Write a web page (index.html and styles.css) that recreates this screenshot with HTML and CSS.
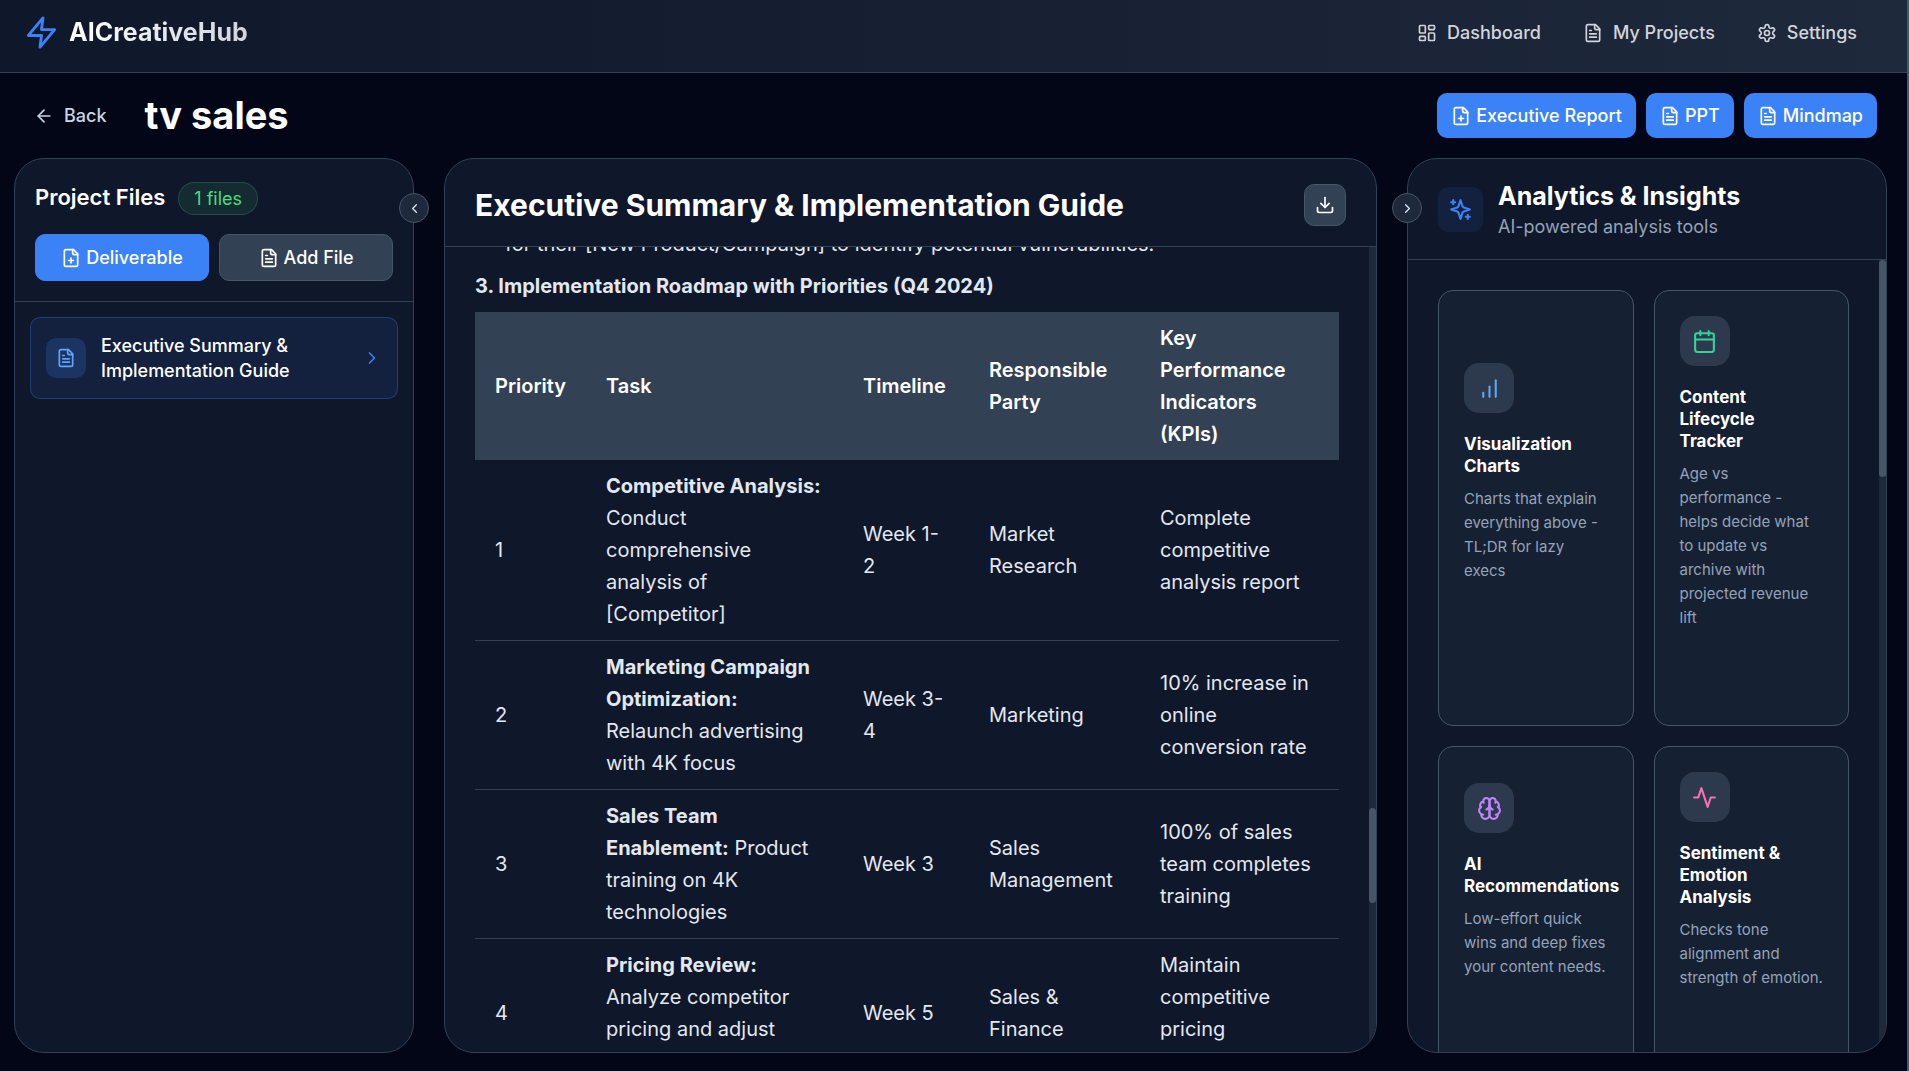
FILE: index.html
```html
<!DOCTYPE html>
<html lang="en">
<head>
<meta charset="utf-8">
<meta name="viewport" content="width=device-width, initial-scale=1">
<title>tv sales – AICreativeHub</title>
<link rel="stylesheet" href="styles.css">
</head>
<body>
<svg class="sprite" aria-hidden="true">
  <symbol id="zap" viewBox="0 0 24 24"><path d="M13 2 3 14h9l-1 8 10-12h-9l1-8z"/></symbol>
  <symbol id="dashboard" viewBox="0 0 24 24"><rect width="7" height="9" x="3" y="3" rx="1"/><rect width="7" height="5" x="14" y="3" rx="1"/><rect width="7" height="9" x="14" y="12" rx="1"/><rect width="7" height="5" x="3" y="16" rx="1"/></symbol>
  <symbol id="file-text" viewBox="0 0 24 24"><path d="M15 2H6a2 2 0 0 0-2 2v16a2 2 0 0 0 2 2h12a2 2 0 0 0 2-2V7Z"/><path d="M14 2v4a2 2 0 0 0 2 2h4"/><path d="M10 9H8"/><path d="M16 13H8"/><path d="M16 17H8"/></symbol>
  <symbol id="file-plus" viewBox="0 0 24 24"><path d="M15 2H6a2 2 0 0 0-2 2v16a2 2 0 0 0 2 2h12a2 2 0 0 0 2-2V7Z"/><path d="M14 2v4a2 2 0 0 0 2 2h4"/><path d="M9 15h6"/><path d="M12 18v-6"/></symbol>
  <symbol id="settings" viewBox="0 0 24 24"><path d="M12.22 2h-.44a2 2 0 0 0-2 2v.18a2 2 0 0 1-1 1.73l-.43.25a2 2 0 0 1-2 0l-.15-.08a2 2 0 0 0-2.73.73l-.22.38a2 2 0 0 0 .73 2.73l.15.1a2 2 0 0 1 1 1.72v.51a2 2 0 0 1-1 1.74l-.15.09a2 2 0 0 0-.73 2.73l.22.38a2 2 0 0 0 2.73.73l.15-.08a2 2 0 0 1 2 0l.43.25a2 2 0 0 1 1 1.73V20a2 2 0 0 0 2 2h.44a2 2 0 0 0 2-2v-.18a2 2 0 0 1 1-1.73l.43-.25a2 2 0 0 1 2 0l.15.08a2 2 0 0 0 2.73-.73l.22-.39a2 2 0 0 0-.73-2.73l-.15-.08a2 2 0 0 1-1-1.74v-.5a2 2 0 0 1 1-1.74l.15-.09a2 2 0 0 0 .73-2.73l-.22-.38a2 2 0 0 0-2.73-.73l-.15.08a2 2 0 0 1-2 0l-.43-.25a2 2 0 0 1-1-1.73V4a2 2 0 0 0-2-2z"/><circle cx="12" cy="12" r="3"/></symbol>
  <symbol id="arrow-left" viewBox="0 0 24 24"><path d="m12 19-7-7 7-7"/><path d="M19 12H5"/></symbol>
  <symbol id="chevron-left" viewBox="0 0 24 24"><path d="m15 18-6-6 6-6"/></symbol>
  <symbol id="chevron-right" viewBox="0 0 24 24"><path d="m9 18 6-6-6-6"/></symbol>
  <symbol id="download" viewBox="0 0 24 24"><path d="M21 15v4a2 2 0 0 1-2 2H5a2 2 0 0 1-2-2v-4"/><path d="m7 10 5 5 5-5"/><path d="M12 15V3"/></symbol>
  <symbol id="sparkles" viewBox="0 0 24 24"><path d="m12 3-1.912 5.813a2 2 0 0 1-1.275 1.275L3 12l5.813 1.912a2 2 0 0 1 1.275 1.275L12 21l1.912-5.813a2 2 0 0 1 1.275-1.275L21 12l-5.813-1.912a2 2 0 0 1-1.275-1.275L12 3Z"/><path d="M5 3v4"/><path d="M19 17v4"/><path d="M3 5h4"/><path d="M17 19h4"/></symbol>
  <symbol id="bars" viewBox="0 0 24 24"><path d="M12 20V10"/><path d="M18 20V4"/><path d="M6 20v-4"/></symbol>
  <symbol id="calendar" viewBox="0 0 24 24"><path d="M8 2v4"/><path d="M16 2v4"/><rect width="18" height="18" x="3" y="4" rx="2"/><path d="M3 10h18"/></symbol>
  <symbol id="brain" viewBox="0 0 24 24"><path d="M12 5a3 3 0 1 0-5.997.125 4 4 0 0 0-2.526 5.77 4 4 0 0 0 .556 6.588A4 4 0 1 0 12 18Z"/><path d="M12 5a3 3 0 1 1 5.997.125 4 4 0 0 1 2.526 5.77 4 4 0 0 1-.556 6.588A4 4 0 1 1 12 18Z"/><path d="M15 13a4.5 4.5 0 0 1-3-4 4.5 4.5 0 0 1-3 4"/><path d="M17.599 6.5a3 3 0 0 0 .399-1.375"/><path d="M6.003 5.125A3 3 0 0 0 6.401 6.5"/><path d="M3.477 10.896a4 4 0 0 1 .585-.396"/><path d="M19.938 10.5a4 4 0 0 1 .585.396"/><path d="M6 18a4 4 0 0 1-1.967-.516"/><path d="M19.967 17.484A4 4 0 0 1 18 18"/></symbol>
  <symbol id="activity" viewBox="0 0 24 24"><path d="M22 12h-4l-3 9L9 3l-3 9H2"/></symbol>
</svg>

<div class="app">
  <header class="topbar">
    <a class="brand" href="#"><svg class="icon brand-icon"><use href="#zap"/></svg><span class="brand-name">AICreativeHub</span></a>
    <nav class="nav">
      <a href="#"><svg class="icon"><use href="#dashboard"/></svg>Dashboard</a>
      <a href="#"><svg class="icon"><use href="#file-text"/></svg>My Projects</a>
      <a href="#"><svg class="icon"><use href="#settings"/></svg>Settings</a>
    </nav>
  </header>

  <div class="titlebar">
    <button class="back" type="button"><svg class="icon"><use href="#arrow-left"/></svg>Back</button>
    <h1>tv sales</h1>
    <div class="actions">
      <button class="btn" type="button"><svg class="icon"><use href="#file-plus"/></svg>Executive Report</button>
      <button class="btn" type="button"><svg class="icon"><use href="#file-text"/></svg>PPT</button>
      <button class="btn" type="button"><svg class="icon"><use href="#file-text"/></svg>Mindmap</button>
    </div>
  </div>

  <main class="columns">
    <aside class="column files">
      <div class="panel">
        <div class="files-head">
          <div class="files-title"><h2>Project Files</h2><span class="badge">1 files</span></div>
          <div class="files-buttons">
            <button class="btn btn-outlined" type="button"><svg class="icon"><use href="#file-plus"/></svg>Deliverable</button>
            <button class="btn btn-outlined btn-muted" type="button"><svg class="icon"><use href="#file-text"/></svg>Add File</button>
          </div>
        </div>
        <div class="file-list">
          <button class="file" type="button">
            <span class="file-icon"><svg class="icon"><use href="#file-text"/></svg></span>
            <span class="file-name">Executive Summary &amp; Implementation Guide</span>
            <svg class="icon file-arrow"><use href="#chevron-right"/></svg>
          </button>
        </div>
      </div>
      <button class="toggle toggle-right" type="button" aria-label="Collapse project files"><svg class="icon"><use href="#chevron-left"/></svg></button>
    </aside>

    <section class="column document">
      <div class="panel">
        <div class="doc-head">
          <h2>Executive Summary &amp; Implementation Guide</h2>
          <button class="download" type="button" aria-label="Download"><svg class="icon"><use href="#download"/></svg></button>
        </div>
        <div class="scroller">
          <div class="doc-body">
            <p class="doc-item">for their [New Product/Campaign] to identify potential vulnerabilities.</p>
            <h3>3. Implementation Roadmap with Priorities (Q4 2024)</h3>
            <table>
              <colgroup><col class="col-priority"><col class="col-task"><col class="col-time"><col class="col-party"><col></colgroup>
              <thead>
                <tr><th>Priority</th><th>Task</th><th>Timeline</th><th>Responsible Party</th><th>Key Performance Indicators (KPIs)</th></tr>
              </thead>
              <tbody>
                <tr><td>1</td><td><strong>Competitive Analysis:</strong> Conduct comprehensive analysis of [Competitor]</td><td>Week 1-2</td><td>Market Research</td><td>Complete competitive analysis report</td></tr>
                <tr><td>2</td><td><strong>Marketing Campaign Optimization:</strong> Relaunch advertising with 4K focus</td><td>Week 3-4</td><td>Marketing</td><td>10% increase in online conversion rate</td></tr>
                <tr><td>3</td><td><strong>Sales Team Enablement:</strong> Product training on 4K technologies</td><td>Week 3</td><td>Sales Management</td><td>100% of sales team completes training</td></tr>
                <tr class="row-tall"><td>4</td><td class="cell-top"><strong>Pricing Review:</strong> Analyze competitor pricing and adjust</td><td>Week 5</td><td>Sales &amp; Finance</td><td class="cell-top">Maintain competitive pricing</td></tr>
              </tbody>
            </table>
          </div>
          <div class="track"><div class="thumb thumb-doc"></div></div>
        </div>
      </div>
    </section>

    <aside class="column analytics">
      <div class="panel">
        <div class="ana-head">
          <span class="ana-icon"><svg class="icon"><use href="#sparkles"/></svg></span>
          <div><h2>Analytics &amp; Insights</h2><p>AI-powered analysis tools</p></div>
        </div>
        <div class="scroller">
          <div class="cards">
            <article class="card"><span class="card-icon blue"><svg class="icon"><use href="#bars"/></svg></span><h3>Visualization Charts</h3><p>Charts that explain everything above - TL;DR for lazy execs</p></article>
            <article class="card"><span class="card-icon green"><svg class="icon"><use href="#calendar"/></svg></span><h3>Content Lifecycle Tracker</h3><p>Age vs performance - helps decide what to update vs archive with projected revenue lift</p></article>
            <article class="card"><span class="card-icon purple"><svg class="icon"><use href="#brain"/></svg></span><h3>AI Recommendations</h3><p>Low-effort quick wins and deep fixes your content needs.</p></article>
            <article class="card"><span class="card-icon pink"><svg class="icon"><use href="#activity"/></svg></span><h3>Sentiment &amp; Emotion Analysis</h3><p>Checks tone alignment and strength of emotion.</p></article>
          </div>
          <div class="track"><div class="thumb thumb-cards"></div></div>
        </div>
      </div>
      <button class="toggle toggle-left" type="button" aria-label="Collapse analytics"><svg class="icon"><use href="#chevron-right"/></svg></button>
    </aside>
  </main>
</div>
</body>
</html>
```
FILE: styles.css
```css
*, *::before, *::after { box-sizing: border-box; }

body {
  margin: 0;
  height: 100vh;
  overflow: hidden;
  background: #020617;
  color: #fff;
  font: 500 18px/25px Inter, "Liberation Sans", sans-serif;
}

h1, h2, h3, p { margin: 0; }
button { font: inherit; color: inherit; cursor: pointer; }
a { color: inherit; text-decoration: none; }

.sprite { display: none; }

.icon {
  width: 20px;
  height: 20px;
  flex: none;
  fill: none;
  stroke: currentColor;
  stroke-width: 2;
  stroke-linecap: round;
  stroke-linejoin: round;
}

.app {
  display: flex;
  flex-direction: column;
  height: 100%;
  border-right: 2px solid #475569;
}

/* Top bar */
.topbar {
  display: flex;
  align-items: center;
  justify-content: space-between;
  padding: 15px 50px 22px 24px;
  border-bottom: 1px solid #334155;
  background: linear-gradient(90deg, #0f172a, #1e293b);
}
.brand { display: flex; align-items: center; gap: 10px; }
.brand-icon { width: 35px; height: 35px; color: #3b82f6; }
.brand-name {
  font-size: 25px;
  font-weight: 700;
  line-height: 35px;
  background: linear-gradient(90deg, #fff, #d1d5db);
  background-clip: text;
  -webkit-background-clip: text;
  color: transparent;
}
.nav { display: flex; gap: 42px; color: #d1d5db; }
.nav a { display: flex; align-items: center; gap: 10px; }

/* Project title row */
.titlebar {
  display: flex;
  align-items: center;
  padding: 20px 30px 20px 34px;
}
.back {
  display: flex;
  align-items: center;
  gap: 10px;
  padding: 0;
  border: 0;
  background: none;
  color: #cbd5e1;
}
h1 { margin-left: 38px; font-size: 38px; font-weight: 700; line-height: 45px; }
.actions { display: flex; gap: 10px; margin-left: auto; }

.btn {
  display: flex;
  align-items: center;
  justify-content: center;
  gap: 5px;
  padding: 10px 14px;
  border: 0;
  border-radius: 10px;
  background: #3b82f6;
}
.btn-outlined { flex: 1; border: 1px solid #3b82f6; }
.btn-muted { background: #334155; border-color: #475569; }

/* Three columns */
.columns {
  display: flex;
  flex: 1;
  gap: 30px;
  min-height: 0;
  padding: 0 20px 18px 14px;
}
.column { position: relative; display: flex; min-width: 0; }
.files { flex: 0 0 400px; }
.document { flex: 1; }
.analytics { flex: 0 0 480px; }

.panel {
  display: flex;
  flex: 1;
  flex-direction: column;
  min-width: 0;
  overflow: hidden;
  border: 1px solid #334155;
  border-radius: 30px;
  background: #0f172a;
}

.toggle {
  position: absolute;
  top: 35px;
  display: flex;
  align-items: center;
  justify-content: center;
  width: 30px;
  height: 30px;
  padding: 0;
  border: 1px solid #475569;
  border-radius: 50%;
  background: #1e293b;
  color: #e2e8f0;
}
.toggle .icon { width: 15px; height: 15px; }
.toggle-right { right: -15px; }
.toggle-left { left: -15px; }

.scroller { display: flex; flex: 1; min-height: 0; overflow: hidden; }
.track { flex: 0 0 7px; background: #1e293b; }
.thumb { border-radius: 4px; background: #475569; }
.thumb-doc { height: 95px; margin-top: 561px; }
.thumb-cards { height: 217px; }

/* Project files */
.files-head { padding: 20px; border-bottom: 1px solid #334155; }
.files-title { display: flex; gap: 13px; padding-top: 3px; }
.files-title h2 { font-size: 22px; font-weight: 600; line-height: 30px; }
.badge {
  padding: 3px 15px;
  border: 1px solid rgba(74, 222, 128, .2);
  border-radius: 17px;
  background: rgba(74, 222, 128, .1);
  color: #4ade80;
  font-weight: 400;
}
.files-buttons { display: flex; gap: 10px; margin-top: 19px; }
.file-list { padding: 15px; }
.file {
  display: flex;
  align-items: center;
  gap: 15px;
  width: 100%;
  padding: 15px;
  border: 1px solid rgba(59, 130, 246, .3);
  border-radius: 10px;
  background: rgba(59, 130, 246, .1);
  text-align: left;
}
.file-icon {
  display: grid;
  place-items: center;
  width: 40px;
  height: 40px;
  border-radius: 10px;
  background: rgba(59, 130, 246, .2);
  color: #60a5fa;
}
.file-name { flex: 1; max-width: 220px; }
.file-arrow { margin-left: auto; color: #3b82f6; }

/* Document */
.doc-head {
  display: flex;
  align-items: center;
  justify-content: space-between;
  padding: 25px 30px 20px;
  border-bottom: 1px solid #334155;
}
.doc-head h2 { font-size: 30px; font-weight: 700; line-height: 40px; }
.download {
  display: grid;
  place-items: center;
  width: 42px;
  height: 42px;
  padding: 0;
  border: 1px solid #475569;
  border-radius: 10px;
  background: #334155;
}
.doc-body {
  flex: 1;
  padding: 0 30px;
  color: #e2e8f0;
  font-size: 20px;
  font-weight: 400;
  line-height: 32px;
}
/* The body is shown part-way down its length. */
.doc-item { margin: -19px 0 10px; padding-left: 30px; }
.doc-body h3 { margin-bottom: 10px; font-size: 20px; font-weight: 700; }

table { width: 100%; table-layout: fixed; border-collapse: collapse; }
.col-priority { width: 111px; }
.col-task { width: 257px; }
.col-time { width: 126px; }
.col-party { width: 171px; }
th, td { padding: 10px 20px; text-align: left; vertical-align: middle; }
th { background: #334155; color: #fff; font-weight: 600; }
tbody tr { border-bottom: 1px solid #334155; }
.row-tall { height: 149px; }
.cell-top { vertical-align: top; }
strong { font-weight: 700; }

/* Analytics */
.ana-head {
  display: flex;
  align-items: center;
  gap: 15px;
  padding: 20px 30px;
  border-bottom: 1px solid #334155;
}
.ana-icon {
  display: grid;
  place-items: center;
  width: 45px;
  height: 45px;
  border-radius: 10px;
  background: rgba(59, 130, 246, .1);
  color: #3b82f6;
}
.ana-icon .icon { width: 25px; height: 25px; }
.ana-head h2 { font-size: 25px; font-weight: 700; line-height: 35px; }
.ana-head p { color: #94a3b8; font-weight: 400; }

.cards {
  display: grid;
  flex: 1;
  grid-template-columns: 1fr 1fr;
  gap: 20px;
  min-width: 0;
  padding: 30px;
  align-content: start;
}
.card {
  display: flex;
  flex-direction: column;
  justify-content: center;
  min-width: 0;
  padding: 25px 25px 95px;
  border: 1px solid #475569;
  border-radius: 15px;
  background: rgba(30, 41, 59, .5);
}
.card-icon {
  display: grid;
  place-items: center;
  width: 50px;
  height: 50px;
  border-radius: 15px;
  background: #2d3a4d;
}
.card-icon .icon { width: 25px; height: 25px; }
.card h3 {
  margin: 20px 0 10px;
  padding-right: 10px;
  font-size: 17px;
  font-weight: 700;
  line-height: 22px;
}
.card p { color: #94a3b8; font-size: 15px; font-weight: 400; line-height: 24px; }
.blue { color: #60a5fa; }
.green { color: #34d399; }
.purple { color: #c084fc; }
.pink { color: #f472b6; }
```
